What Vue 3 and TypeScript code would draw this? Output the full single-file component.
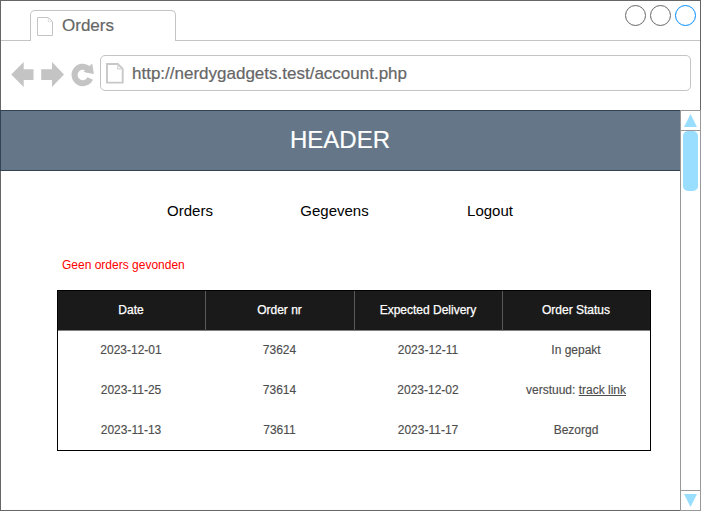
<script setup lang="ts">
interface Order {
  date: string
  nr: string
  delivery: string
  status: string
  link?: string
}

const columns: string[] = ['Date', 'Order nr', 'Expected Delivery', 'Order Status']

const orders: Order[] = [
  { date: '2023-12-01', nr: '73624', delivery: '2023-12-11', status: 'In gepakt' },
  { date: '2023-11-25', nr: '73614', delivery: '2023-12-02', status: 'verstuud:', link: 'track link' },
  { date: '2023-11-13', nr: '73611', delivery: '2023-11-17', status: 'Bezorgd' },
]
</script>

<template>
  <div class="window">
    <div class="tabs">
      <div class="strip-start"></div>
      <div class="tab">
        <svg class="tab-icon" width="17" height="20" viewBox="0 0 17 20" fill="none" stroke="#c4c4c4">
          <path d="M.5.5H11.3L15.5 4.7V18.5H.5Z" />
          <path d="M11.3.5V4.7H15.5" stroke="#dedede" />
        </svg>
        <span class="tab-title">Orders</span>
      </div>
      <div class="strip-end">
        <svg width="76" height="24" viewBox="0 0 76 24" fill="#fff">
          <circle cx="11.5" cy="11.5" r="10" stroke="#666" />
          <circle cx="36.5" cy="11.5" r="10" stroke="#666" />
          <circle cx="61.5" cy="11.5" r="10" stroke="#008cff" />
        </svg>
      </div>
    </div>

    <div class="toolbar">
      <svg class="nav-icons" width="84" height="27" viewBox="0 0 84 27" fill="#c4c4c4">
        <path d="M.2 13.5 12.7 1V8.3H22.5V18.9H12.7V26Z" />
        <path d="M53 13.5 41 1V8.3H30.2V18.9H41V26Z" />
        <path d="M77 7.6A8.2 8.2 0 1 0 79.2 17.4" fill="none" stroke="#c4c4c4" stroke-width="6" />
        <path d="M81.2 2.4 82.9 13 74.5 11.6 72.6 10.4Z" />
      </svg>
      <div class="address">
        <svg width="18" height="21" viewBox="0 0 18 21" fill="none" stroke="#c8c8c8">
          <path d="M1 1H11.8L16.7 5.9V19.6H1Z" stroke-width="1.9" />
          <path d="M11.8 1V5.9H16.7" stroke="#d4d4d4" stroke-width="1.2" />
        </svg>
        <span class="url">http://nerdygadgets.test/account.php</span>
      </div>
    </div>

    <div class="viewport">
      <main class="page">
        <header class="header"><span>HEADER</span></header>
        <nav class="menu">
          <span class="item">Orders</span>
          <span class="item middle">Gegevens</span>
          <span class="item last">Logout</span>
        </nav>
        <p class="notice">Geen orders gevonden</p>
        <table class="orders">
          <colgroup>
            <col class="first"><col class="second"><col class="third"><col>
          </colgroup>
          <thead>
            <tr>
              <th v-for="c in columns" :key="c"><span>{{ c }}</span></th>
            </tr>
          </thead>
          <tbody>
            <tr v-for="o in orders" :key="o.nr">
              <td>{{ o.date }}</td>
              <td>{{ o.nr }}</td>
              <td>{{ o.delivery }}</td>
              <td>{{ o.status }}<template v-if="o.link">&nbsp;<u>{{ o.link }}</u></template></td>
            </tr>
          </tbody>
        </table>
      </main>
      <div class="scrollbar">
        <div class="up">
          <svg width="13" height="13" viewBox="0 0 13 13"><path d="M6.5 0 13 13H0Z" fill="#99ddff" /></svg>
        </div>
        <div class="track"><div class="thumb"></div></div>
        <div class="down">
          <svg width="13" height="13" viewBox="0 0 13 13"><path d="M0 0H13L6.5 13Z" fill="#99ddff" /></svg>
        </div>
      </div>
    </div>
  </div>
</template>

<style>
body {
  margin: 0;
  background: #fff;
}
</style>

<style scoped>
.window {
  box-sizing: border-box;
  width: 701px;
  height: 511px;
  border: 1px solid #666;
  background: #fff;
  font-family: "Liberation Sans", Arial, sans-serif;
  display: flex;
  flex-direction: column;
}
svg {
  display: block;
  flex: none;
}
.tabs {
  display: flex;
  height: 40px;
  box-sizing: border-box;
}
.strip-start {
  width: 29px;
  border-bottom: 1px solid #c4c4c4;
}
.tab {
  box-sizing: border-box;
  width: 146px;
  height: 31px;
  margin-top: 9px;
  border: 1px solid #c4c4c4;
  border-bottom: 0;
  border-radius: 5px 5px 0 0;
  display: flex;
  align-items: flex-start;
  padding: 6px 0 0 6px;
}
.tab-title {
  margin-left: 8px;
  margin-top: -1px;
  font-size: 17px;
  line-height: 20px;
  color: #666;
  -webkit-text-stroke: 0.2px #666;
}
.strip-end {
  flex: 1;
  display: flex;
  justify-content: flex-end;
  border-bottom: 1px solid #c4c4c4;
  padding-top: 3px;
}
.toolbar {
  height: 69px;
  display: flex;
  align-items: flex-start;
  padding: 14px 9px 0 10px;
  box-sizing: border-box;
}
.nav-icons {
  margin-top: 6px;
}
.address {
  box-sizing: border-box;
  flex: 1;
  height: 36px;
  margin-left: 5px;
  border: 1px solid #c4c4c4;
  border-radius: 5px;
  display: flex;
  align-items: center;
  padding: 1px 0 0 5px;
}
.url {
  margin-left: 8px;
  font-size: 17px;
  line-height: 20px;
  color: #666;
  -webkit-text-stroke: 0.2px #666;
}
.viewport {
  display: flex;
  height: 400px;
}
.page {
  flex: none;
  width: 679px;
}
.header {
  box-sizing: border-box;
  height: 61px;
  margin-left: -1px;
  padding-right: 1px;
  border: 1px solid #314354;
  border-right: 0;
  background: #647687;
  color: #fff;
  font-size: 24px;
  line-height: 58px;
  text-align: center;
  -webkit-text-stroke: 0.2px #fff;
}
.menu {
  display: flex;
  margin: 30px 0 0 129px;
  font-size: 15px;
  line-height: 20px;
  color: #000;
  text-align: center;
}
.item {
  width: 120px;
}
.item.middle {
  width: 169px;
}
.item.last {
  width: 142px;
}
.notice {
  margin: 35px 0 0 61px;
  font-size: 12px;
  line-height: 18px;
  color: #f00;
}
.orders {
  box-sizing: border-box;
  width: 594px;
  height: 161px;
  margin: 16px 0 0 56px;
  border: 1px solid #000;
  border-spacing: 0;
  table-layout: fixed;
  font-size: 12px;
  line-height: 18px;
  text-align: center;
  color: #4d4d4d;
}
.first,
.third {
  width: 148px;
}
.second {
  width: 149px;
}
th {
  box-sizing: border-box;
  height: 40px;
  padding: 0 1px 1px 0;
  background: #1a1a1a;
  color: #fff;
  font-weight: 400;
  -webkit-text-stroke: 0.25px #fff;
  border-bottom: 1px solid #808080;
  border-right: 1px solid #595959;
}
th:last-child {
  border-right: 0;
}
td {
  box-sizing: border-box;
  height: 40px;
  padding: 0 2px 2px 0;
  -webkit-text-stroke: 0.15px #4d4d4d;
}
td:last-child {
  padding-right: 1px;
}
tbody tr:last-child td {
  height: 39px;
  padding-bottom: 1px;
}
.scrollbar {
  box-sizing: border-box;
  width: 21px;
  height: 401px;
  flex: none;
  border: 1px solid #999;
  background: #fff;
  display: flex;
  flex-direction: column;
}
.up,
.down {
  box-sizing: border-box;
  height: 20px;
  display: flex;
  justify-content: center;
  padding-top: 3px;
}
.up {
  border-bottom: 1px solid #999;
}
.down {
  border-top: 1px solid #999;
}
.track {
  flex: 1;
}
.thumb {
  width: 15px;
  height: 60px;
  margin: 0 auto;
  border-radius: 5px;
  background: #99ddff;
}
</style>
